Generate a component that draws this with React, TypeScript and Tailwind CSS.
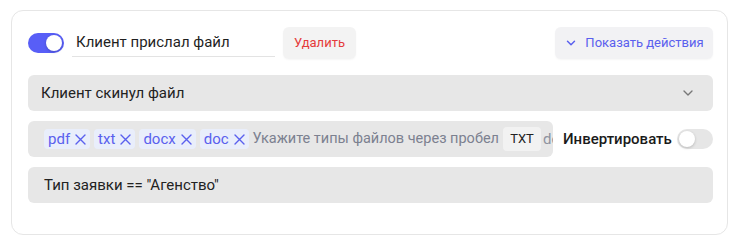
import { useState } from "react";
import { ChevronDown } from "lucide-react";

function Toggle({ on }: { on: boolean }) {
  return (
    <div
      className={`relative w-9 h-5 rounded-full shrink-0 ${on ? "bg-[#585ef7]" : "bg-[#e6e6e6]"}`}
    >
      <div
        className={`absolute top-[2px] w-4 h-4 rounded-full bg-white shadow-[0_1px_3px_rgba(0,0,0,0.2)] ${on ? "left-[18px]" : "left-[2px]"}`}
      />
    </div>
  );
}

function Cross() {
  return (
    <svg width="11" height="11" viewBox="0 0 11 11" className="shrink-0">
      <path d="M1 1L10 10M10 1L1 10" stroke="currentColor" strokeWidth="1.4" strokeLinecap="round" />
    </svg>
  );
}

const tags = ["pdf", "txt", "docx", "doc"];

export default function App() {
  const [title] = useState("Клиент прислал файл");

  return (
    <div className="bg-white w-[734px] h-[243px] pt-[10px] pl-[11px] font-['Roboto',sans-serif]">
      <div className="w-[717px] h-[225px] border border-[#e6e6e6] rounded-[12px] pl-4 pr-[14px] pt-4 flex flex-col">
        {/* Header */}
        <div className="flex items-center h-8">
          <Toggle on />
          <div className="ml-2 w-[203px] h-7 border-b border-[#e3e3e3] px-1 flex items-center text-[15px] text-[#1f1f1f]">
            {title}
          </div>
          <button className="ml-2 h-8 w-[73px] rounded-md bg-[#f3f3f3] text-[13px] text-[#e53b3b] shadow-[0_1px_2px_rgba(0,0,0,0.04)]">
            Удалить
          </button>
          <button className="ml-auto h-8 w-[158px] rounded-md bg-[#f2f2f4] flex items-center justify-center gap-[7px] text-[13px] text-[#5a60ee] shadow-[0_1px_2px_rgba(0,0,0,0.04)]">
            <ChevronDown className="w-3.5 h-3.5" strokeWidth={2.5} />
            Показать действия
          </button>
        </div>

        {/* Select */}
        <div className="mt-4 h-9 rounded-md bg-[#e7e7e7] flex items-center justify-between pl-[13px] pr-[17px] text-[15px] text-[#222]">
          <span>Клиент скинул файл</span>
          <ChevronDown className="w-4 h-4 text-[#777]" strokeWidth={2} />
        </div>

        {/* Tags + invert */}
        <div className="mt-[10px] flex items-center h-9">
          <div className="w-[525px] h-9 rounded-md bg-[#e7e7e7] flex items-center gap-1 pl-4 overflow-hidden whitespace-nowrap">
            {tags.map((t) => (
              <span
                key={t}
                className="h-5 shrink-0 rounded-[4px] bg-[#e9eefb] px-1 flex items-center gap-[5px] text-[15px] text-[#5a60ee]"
              >
                {t}
                <Cross />
              </span>
            ))}
            <span className="shrink-0 text-[14.5px] text-[#7c8190]">
              Укажите типы файлов через пробел
            </span>
            <span className="shrink-0 h-6 w-[38px] flex items-center justify-center rounded-[4px] bg-[#f2f2f2] text-[13px] text-[#222]">
              TXT
            </span>
            <span className="shrink-0 -ml-[2px] text-[15px] text-[#8e93a0]">doc</span>
          </div>
          <span className="ml-[10px] text-[15px] font-medium text-[#1a1a1a]">
            Инвертировать
          </span>
          <div className="ml-auto">
            <Toggle on={false} />
          </div>
        </div>

        {/* Condition */}
        <div className="mt-[10px] h-9 rounded-md bg-[#e7e7e7] flex items-center pl-4 text-[15px] text-[#222]">
          Тип заявки == "Агенство"
        </div>
      </div>
    </div>
  );
}
